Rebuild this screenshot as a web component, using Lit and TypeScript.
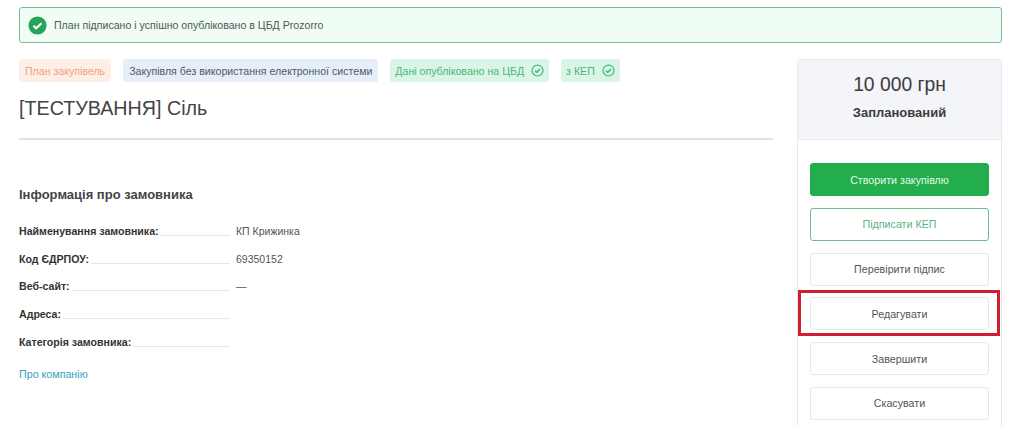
import { LitElement, html, css, svg } from "lit";
import { customElement } from "lit/decorators.js";

const ring = svg`<svg class="ring" viewBox="0 0 14 14" width="13" height="13"><circle cx="7" cy="7" r="5.9" fill="none" stroke="currentColor" stroke-width="1.3"/><path d="M4.3 7.2 6.2 9l3.5-3.7" fill="none" stroke="currentColor" stroke-width="1.6"/></svg>`;

const rows: [string, string][] = [
  ["Найменування замовника:", "КП Крижинка"],
  ["Код ЄДРПОУ:", "69350152"],
  ["Веб-сайт:", "—"],
  ["Адреса:", ""],
  ["Категорія замовника:", ""],
];

@customElement("app-root")
export class AppRoot extends LitElement {
  static styles = css`
    :host { display: block; width: 1024px; height: 426px; overflow: hidden; background: #fff; position: relative;
      font-family: "Liberation Sans", Arial, sans-serif; color: #444; font-size: 11px; }
    .page { padding: 7px 22px 0 19px; display: flex; flex-direction: column; gap: 16px; }
    .alert { height: 36px; box-sizing: border-box; border: 1px solid #7cb89c; border-radius: 3px; background: #effdf5;
      display: flex; align-items: center; gap: 7px; padding-left: 8px; color: #555; font-size: 10.6px; }
    .alert svg { flex: none; }
    .cols { display: flex; gap: 24px; align-items: flex-start; }
    .main { width: 754px; flex: none; }
    .tags { display: flex; gap: 12px; height: 23px; }
    .tag { display: flex; align-items: center; gap: 7px; padding: 0 6px; border-radius: 3px; font-size: 10.6px; white-space: nowrap; }
    .orange { background: #fdeee6; color: #f0a47e; }
    .blue { background: #e6eef9; color: #4f5a68; }
    .green { background: #daf5e5; color: #45b87a; padding: 0 5px; }
    h1 { margin: 0; font-weight: 400; font-size: 19.7px; line-height: 24px; padding-top: 14px; color: #444; }
    hr { border: 0; height: 2px; background: #e2e2e2; margin: 18px 0 0; }
    h2 { margin: 47px 0 0; font-size: 13px; line-height: 16px; font-weight: 700; color: #444; }
    .info { margin-top: 14px; display: flex; flex-direction: column; }
    .row { display: flex; height: 27.8px; align-items: center; width: 320px; }
    .label { width: 211px; flex: none; display: flex; font-weight: 700; font-size: 10.6px; color: #333; white-space: nowrap; }
    .dots { flex: 1; margin: 0 0 1px 2px; border-bottom: 1px solid #e6e6e6; align-self: flex-end; }
    .value { padding-left: 6px; color: #555; font-size: 10.5px; }
    .link { display: block; margin-top: 11px; color: #35a3ba; font-size: 10.7px; text-decoration: none; line-height: 14px; }
    .side { width: 205px; flex: none; box-sizing: border-box; border: 1px solid #e6e9ee; border-radius: 3px 3px 0 0; height: 380px; }
    .head { height: 80px; box-sizing: border-box; background: #f3f5f9; border-bottom: 1px solid #e6e9ee; text-align: center; padding-top: 13px; }
    .price { font-size: 19.3px; line-height: 24px; color: #3c3c3c; }
    .status { font-size: 13px; font-weight: 700; line-height: 16px; margin-top: 8px; color: #3c3c3c; }
    .btns { display: flex; flex-direction: column; gap: 11.8px; padding: 23px 12px 0; }
    .btn { height: 33px; box-sizing: border-box; border: 1px solid #e6e8ec; border-radius: 3px; background: #fff; color: #555;
      font: inherit; font-size: 10.7px; display: flex; align-items: center; justify-content: center; padding: 0; }
    .primary { background: #22ae4c; border-color: #22ae4c; color: #e4f8ea; }
    .outline { border-color: #6fbc8e; color: #5cb283; }
    .mark { position: absolute; left: 798px; top: 290px; width: 202px; height: 46px; box-sizing: border-box; border: 3px solid #cf1f2e; pointer-events: none; }
  `;

  render() {
    return html`
      <div class="page">
        <div class="alert">
          <svg viewBox="0 0 20 20" width="19" height="19"><circle cx="10" cy="10" r="9.5" fill="#22a45a"/><path d="M5.8 10.2 8.6 13l5.6-5.4" fill="none" stroke="#fff" stroke-width="2.2"/></svg>
          <span>План підписано і успішно опубліковано в ЦБД Prozorro</span>
        </div>
        <div class="cols">
          <div class="main">
            <div class="tags">
              <span class="tag orange">План закупівель</span>
              <span class="tag blue">Закупівля без використання електронної системи</span>
              <span class="tag green">Дані опубліковано на ЦБД ${ring}</span>
              <span class="tag green">з КЕП ${ring}</span>
            </div>
            <h1>[ТЕСТУВАННЯ] Сіль</h1>
            <hr />
            <h2>Інформація про замовника</h2>
            <div class="info">
              ${rows.map(([l, v]) => html`<div class="row"><div class="label">${l}<span class="dots"></span></div><div class="value">${v}</div></div>`)}
            </div>
            <a class="link" href="#">Про компанію</a>
          </div>
          <aside class="side">
            <div class="head">
              <div class="price">10 000 грн</div>
              <div class="status">Запланований</div>
            </div>
            <div class="btns">
              <button class="btn primary">Створити закупівлю</button>
              <button class="btn outline">Підписати КЕП</button>
              <button class="btn">Перевірити підпис</button>
              <button class="btn">Редагувати</button>
              <button class="btn">Завершити</button>
              <button class="btn">Скасувати</button>
            </div>
          </aside>
        </div>
      </div>
      <div class="mark"></div>
    `;
  }
}
